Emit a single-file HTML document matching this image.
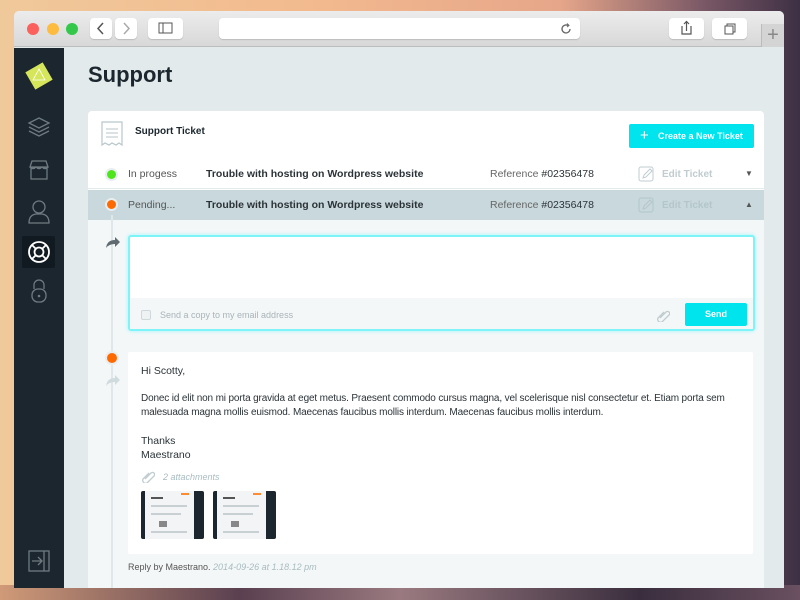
<!DOCTYPE html>
<html><head><meta charset="utf-8"><style>
*{margin:0;padding:0;box-sizing:border-box}
body{width:800px;height:600px;overflow:hidden;position:relative;font-family:"Liberation Sans",sans-serif;
background:linear-gradient(90deg,#f0c99a 0%,#f2b98e 40%,#e6a68a 70%,#7a5866 88%,#3d3044 100%)}
.bot{position:absolute;left:0;right:0;top:585px;height:15px;background:linear-gradient(90deg,#d09a78,#5a4050 30%,#9a7a80 50%,#3a2e3e 80%,#6a5060)}
.a{position:absolute}
.win{position:absolute;left:14px;top:11px;width:770px;height:577px;border-radius:5px 5px 0 0;overflow:hidden;background:#e3eaec}
.tb{position:absolute;left:0;top:0;width:770px;height:36px;background:linear-gradient(#ececec,#d8d8d8);border-bottom:1px solid #bdbdbd}
.dot{position:absolute;top:12px;width:12px;height:12px;border-radius:50%}
.btn{position:absolute;top:7px;height:21px;background:#fff;border-radius:4px;box-shadow:0 1px 1px rgba(0,0,0,.15)}
.side{position:absolute;left:0;top:37px;width:50px;height:540px;background:#1b262e}
.card{position:absolute;left:74px;top:100px;width:676px;height:480px;background:#fff;border-radius:4px}
.row{position:absolute;left:0;width:676px;height:30px;font-size:10.5px;color:#2b3338}
.row span{position:absolute;top:9px}
.th{position:absolute;top:139px;width:63px;height:48px;background:#f2f4f5;border-left:4px solid #1b262e;border-right:10px solid #1b262e;border-radius:2px;overflow:hidden}
.th i{position:absolute;height:2px;background:#c8d0d4}
</style></head><body>
<div class="bot"></div>
<div class="win">
 <div class="tb">
  <div class="dot" style="left:13px;background:#fc605c"></div>
  <div class="dot" style="left:33px;background:#fdbc40"></div>
  <div class="dot" style="left:52px;background:#34c84a"></div>
  <div class="btn" style="left:76px;width:22px"><svg width="22" height="21"><path d="M13 5l-5 5.5 5 5.5" stroke="#555" stroke-width="1.5" fill="none"/></svg></div>
  <div class="btn" style="left:101px;width:22px"><svg width="22" height="21"><path d="M9 5l5 5.5-5 5.5" stroke="#aaa" stroke-width="1.5" fill="none"/></svg></div>
  <div class="btn" style="left:134px;width:35px"><svg width="35" height="21"><rect x="11" y="5" width="13" height="10" stroke="#555" fill="none"/><line x1="15" y1="5" x2="15" y2="15" stroke="#555"/></svg></div>
  <div class="btn" style="left:205px;width:361px"><svg class="a" style="left:340px;top:4px" width="14" height="14"><path d="M11 7a4 4 0 1 1-2-3.5" stroke="#666" stroke-width="1.3" fill="none"/><path d="M8 1.5l2 2-2 1.5" stroke="#666" fill="none"/></svg></div>
  <div class="btn" style="left:655px;width:35px"><svg width="35" height="21"><path d="M13 8v8h9V8M17.5 3v10M15 6l2.5-2.5L20 6" stroke="#555" stroke-width="1.2" fill="none"/></svg></div>
  <div class="btn" style="left:698px;width:35px"><svg width="35" height="21"><rect x="13" y="8" width="8" height="8" stroke="#555" fill="none"/><path d="M15 8V6h8v8h-2" stroke="#555" fill="none"/></svg></div>
  <div class="a" style="left:747px;top:13px;width:23px;height:23px;background:#d4d4d4;border-left:1px solid #bbb;color:#888;font-size:20px;text-align:center;line-height:22px">+</div>
 </div>
 <div class="side">
  <svg class="a" style="left:9px;top:12px" width="32" height="32"><rect x="6" y="6" width="20" height="20" transform="rotate(-30 16 16)" fill="#d6e65a"/><path d="M16 9l6 11H10z" stroke="#fff" stroke-width=".8" fill="none"/></svg>
  <svg class="a" style="left:13px;top:68px" width="24" height="22"><path d="M12 2l10 5-10 5-10-5z M2 11l10 5 10-5 M2 15l10 5 10-5" stroke="#6f7b82" stroke-width="1.3" fill="none"/></svg>
  <svg class="a" style="left:13px;top:110px" width="24" height="24"><path d="M3 9l2-6h14l2 6z M4 9v12h16V9 M3 9q3 3 6 0q3 3 6 0q3 3 6 0" stroke="#6f7b82" stroke-width="1.3" fill="none"/></svg>
  <svg class="a" style="left:13px;top:151px" width="24" height="26"><circle cx="12" cy="8" r="6" stroke="#6f7b82" stroke-width="1.3" fill="none"/><path d="M2 24q0-8 7-9h6q7 1 7 9z" stroke="#6f7b82" stroke-width="1.3" fill="none"/></svg>
  <div class="a" style="left:8px;top:188px;width:33px;height:32px;background:#111a20;border-radius:2px"></div>
  <svg class="a" style="left:13px;top:192px" width="24" height="24"><circle cx="12" cy="12" r="10" stroke="#fff" stroke-width="1.8" fill="none"/><circle cx="12" cy="12" r="4.5" stroke="#fff" stroke-width="1.8" fill="none"/><path d="M5 5l4 4M19 5l-4 4M5 19l4-4M19 19l-4-4" stroke="#fff" stroke-width="1.8"/></svg>
  <svg class="a" style="left:15px;top:230px" width="20" height="26"><path d="M5 11V7a5 5 0 0 1 10 0v4" stroke="#6f7b82" stroke-width="1.3" fill="none"/><rect x="3" y="11" width="14" height="13" rx="6" stroke="#6f7b82" stroke-width="1.3" fill="none"/><circle cx="10" cy="18" r="1.3" fill="#6f7b82"/></svg>
  <svg class="a" style="left:14px;top:502px" width="24" height="22"><rect x="1" y="1" width="20" height="20" stroke="#6f7b82" stroke-width="1.3" fill="none"/><line x1="16" y1="1" x2="16" y2="21" stroke="#6f7b82" stroke-width="1.3"/><path d="M4 11h9M10 7l4 4-4 4" stroke="#6f7b82" stroke-width="1.3" fill="none"/></svg>
 </div>
 <div class="a" style="left:74px;top:51px;font-size:22px;font-weight:bold;color:#1b262e">Support</div>
 <div class="card">
  <svg class="a" style="left:13px;top:10px" width="22" height="26"><path d="M1 1h20v23l-3-2-3 2-4-2-3 2-4-2-3 2z" stroke="#b9c6ca" stroke-width="1.2" fill="none"/><path d="M5 8h12M5 12h12M5 16h12" stroke="#b9c6ca"/></svg>
  <div class="a" style="left:47px;top:15px;font-size:10px;font-weight:bold;color:#1b262e">Support Ticket</div>
  <div class="a" style="left:541px;top:13px;width:125px;height:24px;background:#00e4ee;border-radius:2px;color:#fff;font-size:9px;font-weight:bold;line-height:24px;padding-left:29px">Create a New Ticket<span class="a" style="left:11px;top:0;font-size:15px;font-weight:normal">+</span></div>
  <div class="row" style="top:48px;border-bottom:1px solid #e3eaec">
   <div class="a" style="left:17px;top:9px;width:13px;height:13px;border-radius:50%;background:#4ee61a;border:2px solid #e8eef0"></div>
   <span style="left:40px;color:#555">In progess</span><span style="left:118px;font-weight:bold">Trouble with hosting on Wordpress website</span>
   <span style="left:402px;color:#666">Reference <b style="font-weight:normal;color:#2b3338">#02356478</b></span>
   <svg class="a" style="left:550px;top:7px" width="16" height="16"><rect x="1" y="1" width="14" height="14" rx="2" stroke="#c0ccd0" fill="none"/><path d="M5 12l1-3 6-6 2 2-6 6z" stroke="#c0ccd0" fill="none"/></svg>
   <span style="left:574px;color:#c0ccd0;font-weight:bold;font-size:10px;top:10px">Edit Ticket</span>
   <span style="left:657px;color:#555;font-size:8px;top:10px">▼</span>
  </div>
  <div class="row" style="top:79px;background:#c8d8dc">
   <div class="a" style="left:17px;top:8px;width:13px;height:13px;border-radius:50%;background:#ff6a00;border:2px solid #e8eef0"></div>
   <span style="left:40px;color:#555">Pending...</span><span style="left:118px;font-weight:bold">Trouble with hosting on Wordpress website</span>
   <span style="left:402px;color:#666">Reference <b style="font-weight:normal;color:#2b3338">#02356478</b></span>
   <svg class="a" style="left:550px;top:7px" width="16" height="16"><rect x="1" y="1" width="14" height="14" rx="2" stroke="#b4c6ca" fill="none"/><path d="M5 12l1-3 6-6 2 2-6 6z" stroke="#b4c6ca" fill="none"/></svg>
   <span style="left:574px;color:#b4c6ca;font-weight:bold;font-size:10px;top:10px">Edit Ticket</span>
   <span style="left:657px;color:#555;font-size:8px;top:10px">▲</span>
  </div>
  <div class="a" style="left:0;top:109px;width:676px;height:371px;background:#f4f7f8"></div>
  <div class="a" style="left:23px;top:104px;width:2px;height:376px;background:#dfe7e9"></div>
  <svg class="a" style="left:17px;top:124px" width="16" height="14"><path d="M1 13q1-8 9-8V2l5 5-5 5V9q-6 0-9 4z" fill="#5f6b70"/></svg>
  <div class="a" style="left:40px;top:124px;width:627px;height:96px;background:#fff;border:2px solid #7ef4f8;border-radius:3px;box-shadow:0 0 4px #a0f6fa;overflow:hidden">
   <div class="a" style="left:0;top:61px;width:625px;height:35px;background:#f4f7f8"></div>
   <div class="a" style="left:11px;top:73px;width:10px;height:10px;border:1px solid #cfd8db;border-radius:2px;background:#eef2f3"></div>
   <div class="a" style="left:30px;top:73px;font-size:9px;color:#a8b4b8">Send a copy to my email address</div>
   <svg class="a" style="left:526px;top:71px" width="14" height="14"><path d="M4 10l6-6a2 2 0 0 1 3 3l-7 7a3 3 0 0 1-4-4l6-6" stroke="#c0ccd0" stroke-width="1.3" fill="none"/></svg>
   <div class="a" style="left:555px;top:66px;width:62px;height:23px;background:#00e4ee;border-radius:2px;color:#fff;font-size:9px;font-weight:bold;text-align:center;line-height:23px">Send</div>
  </div>
  <div class="a" style="left:17px;top:240px;width:14px;height:14px;border-radius:50%;background:#ff6a00;border:2px solid #e8eef0"></div>
  <svg class="a" style="left:17px;top:262px" width="16" height="14"><path d="M1 13q1-8 9-8V2l5 5-5 5V9q-6 0-9 4z" fill="#cfdbde"/></svg>
  <div class="a" style="left:40px;top:241px;width:625px;height:202px;background:#fff;border-radius:2px;font-size:10.5px;color:#2b3338;line-height:14px">
   <div class="a" style="left:13px;top:12px">Hi Scotty,</div>
   <div class="a" style="left:13px;top:40px;width:615px;font-size:10px;letter-spacing:-0.15px">Donec id elit non mi porta gravida at eget metus. Praesent commodo cursus magna, vel scelerisque nisl consectetur et. Etiam porta sem malesuada magna mollis euismod. Maecenas faucibus mollis interdum. Maecenas faucibus mollis interdum.</div>
   <div class="a" style="left:13px;top:82px">Thanks<br>Maestrano</div>
   <svg class="a" style="left:13px;top:117px" width="14" height="14"><path d="M4 10l6-6a2 2 0 0 1 3 3l-7 7a3 3 0 0 1-4-4l6-6" stroke="#c0ccd0" stroke-width="1.3" fill="none"/></svg>
   <div class="a" style="left:35px;top:118px;font-size:9px;font-style:italic;color:#a8bcc0">2 attachments</div>
   <div class="th" style="left:13px"><i style="left:36px;top:2px;width:8px;background:#ff8a30"></i><i style="left:6px;top:6px;width:12px;background:#555"></i><i style="left:6px;top:14px;width:36px"></i><i style="left:6px;top:22px;width:30px"></i><i style="left:14px;top:30px;width:8px;height:6px;background:#888"></i><i style="left:6px;top:40px;width:36px"></i></div>
   <div class="th" style="left:85px"><i style="left:36px;top:2px;width:8px;background:#ff8a30"></i><i style="left:6px;top:6px;width:12px;background:#555"></i><i style="left:6px;top:14px;width:36px"></i><i style="left:6px;top:22px;width:30px"></i><i style="left:14px;top:30px;width:8px;height:6px;background:#888"></i><i style="left:6px;top:40px;width:36px"></i></div>
  </div>
  <div class="a" style="left:40px;top:451px;font-size:9px;color:#555">Reply by Maestrano. <i style="color:#a8bcc0">2014-09-26 at 1.18.12 pm</i></div>
 </div>
</div>
</body></html>
